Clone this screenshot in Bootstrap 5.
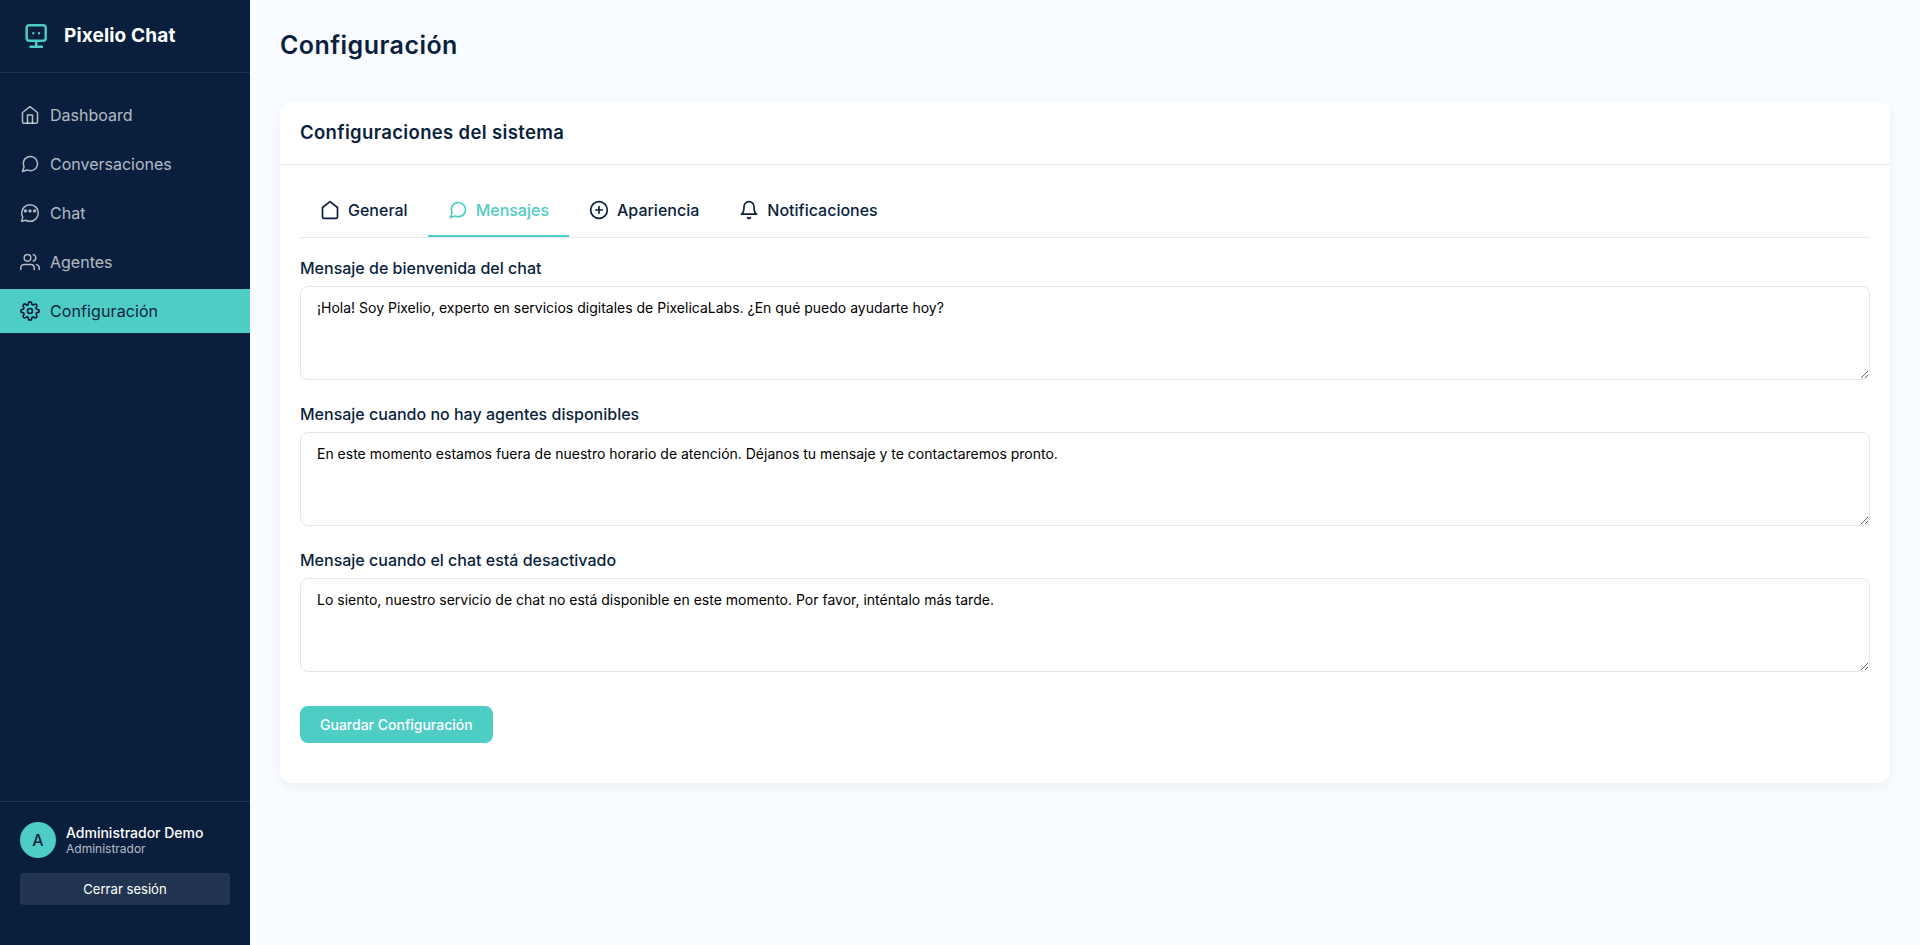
<!DOCTYPE html>
<html lang="es">
<head>
<meta charset="utf-8">
<meta name="viewport" content="width=device-width, initial-scale=1">
<title>Pixelio Chat - Configuración</title>
<link href="https://cdn.jsdelivr.net/npm/bootstrap@5.3.0/dist/css/bootstrap.min.css" rel="stylesheet">
<style>
:root{--navy:#0a1f3d;--teal:#4ecdc4;--line:#e5e7eb}
body{font-family:Inter,"Liberation Sans",sans-serif;background:#f8fbff;color:var(--navy);line-height:1.6}
svg{fill:none;stroke:currentColor;stroke-width:2;stroke-linecap:round;stroke-linejoin:round;flex:none}
.sidebar{width:250px;background:var(--navy);color:#fff}
.brand{height:73px;padding:0 20px;gap:12px;border-bottom:1px solid rgba(255,255,255,.1)}
.brand svg{color:var(--teal);stroke-width:2.4}
.brand-name{font-size:19px;font-weight:650;letter-spacing:.15px}
.side-nav{padding-top:20px;gap:5px}
.side-nav .nav-link{height:44px;padding:1px 20px 0;gap:10px;color:rgba(255,255,255,.7);font-size:16px}
.side-nav svg{stroke-width:1.8;margin-top:-1px}
.side-nav .nav-link.active{background:var(--teal);color:var(--navy);letter-spacing:.1px}
.side-nav .active svg{stroke-width:2}
.side-foot{padding:20px 20px 40px;border-top:1px solid rgba(255,255,255,.1)}
.user-row{gap:10px;margin-bottom:15px}
.avatar{width:36px;height:36px;background:var(--teal);color:var(--navy);font-weight:500;line-height:1}
.user-name{font-size:14px;font-weight:500;line-height:17px}
.user-role{font-size:12px;line-height:15px;color:rgba(255,255,255,.7)}
.btn-logout{height:32px;border:0;border-radius:4px;background:rgba(255,255,255,.1);color:#fff;font-size:13.1px;padding:1px 0 0}
.btn-logout:hover{background:rgba(255,255,255,.2);color:#fff}
.content{padding:25px 30px}
.page-title{font-size:25px;font-weight:600;line-height:40px;letter-spacing:.45px;margin:0 0 37px}
.panel{border:0;border-radius:12px;box-shadow:0 4px 12px rgba(10,31,61,.05)}
.panel .card-header{height:63px;padding:0 20px 1px;background:#fff;border-color:var(--line);border-radius:12px 12px 0 0}
.panel-title{font-size:18.5px;font-weight:600;letter-spacing:.35px;margin:0}
.panel .card-body{padding:20px 20px 40px}
.tabs{border-bottom:1px solid var(--line);height:53px;margin-bottom:20px}
.tabs .nav-link{height:52px;padding:2px 20px 0;gap:8px;font-weight:500;font-size:16px;color:var(--navy);border-bottom:2px solid transparent}
.tabs svg{margin-top:-2px}
.tabs .nav-link.active{color:var(--teal);border-color:var(--teal)}
.form-label{font-weight:500;font-size:16px;line-height:20px;margin-bottom:8px}
textarea.form-control{height:94px;padding:12px 16px;border-color:var(--line);border-radius:8px;color:#000;font-size:14px;line-height:17px;resize:vertical}
.btn-save{height:37px;padding:0 20px;margin-top:34px;border:0;border-radius:8px;background:var(--teal);color:#fff;font-size:14px;font-weight:500}
.btn-save:hover{background:#3dbdb4;color:#fff}
</style>
</head>
<body>
<div class="d-flex vh-100">
  <aside class="sidebar d-flex flex-column flex-shrink-0">
    <div class="brand d-flex align-items-center">
      <svg width="32" height="32" viewBox="0 0 32 32"><rect x="6.700" y="5.200" width="19" height="15.600" rx="2.500"/><path d="M16.200 21v5M10.500 26.700h11.500"/><path d="M13.300 13.300h.01M19 13.300h.01"/></svg>
      <span class="brand-name">Pixelio Chat</span>
    </div>
    <nav class="side-nav nav flex-column flex-nowrap flex-grow-1">
      <a class="nav-link d-flex align-items-center" href="#"><svg width="20" height="20" viewBox="0 0 24 24"><path d="M3 9l9-7 9 7v11a2 2 0 0 1-2 2H5a2 2 0 0 1-2-2z"/><path d="M9 22V12h6v10"/></svg>Dashboard</a>
      <a class="nav-link d-flex align-items-center" href="#"><svg width="20" height="20" viewBox="0 0 24 24"><path d="M21 11.500a8.380 8.380 0 0 1-.9 3.800 8.500 8.500 0 0 1-7.600 4.700 8.380 8.380 0 0 1-3.800-.9L3 21l1.900-5.700a8.380 8.380 0 0 1-.9-3.800 8.500 8.500 0 0 1 4.700-7.600 8.380 8.380 0 0 1 3.800-.9h.5a8.480 8.480 0 0 1 8 8v.5z"/></svg>Conversaciones</a>
      <a class="nav-link d-flex align-items-center" href="#"><svg width="20" height="20" viewBox="0 0 24 24"><path d="M12 22c5.500 0 10-4.500 10-10S17.500 2 12 2 2 6.500 2 12c0 1.800.5 3.500 1.300 5L2 22l5-1.300c1.500.8 3.200 1.300 5 1.300z"/><g fill="currentColor" stroke="none"><circle cx="6.500" cy="9.500" r="2"/><circle cx="12" cy="9.500" r="2"/><circle cx="17.500" cy="9.500" r="2"/></g></svg>Chat</a>
      <a class="nav-link d-flex align-items-center" href="#"><svg width="20" height="20" viewBox="0 0 24 24"><path d="M17 21v-2a4 4 0 0 0-4-4H5a4 4 0 0 0-4 4v2"/><circle cx="9" cy="7" r="4"/><path d="M23 21v-2a4 4 0 0 0-3-3.870M16 3.130a4 4 0 0 1 0 7.750"/></svg>Agentes</a>
      <a class="nav-link active d-flex align-items-center" href="#"><svg width="20" height="20" viewBox="0 0 24 24"><circle cx="12" cy="12" r="3"/><path d="M19.400 15a1.650 1.650 0 0 0 .33 1.820l.06.06a2 2 0 1 1-2.830 2.830l-.06-.06a1.650 1.650 0 0 0-2.800 1.180V21a2 2 0 0 1-4 0v-.09A1.650 1.650 0 0 0 7.180 19.730l-.06.06a2 2 0 1 1-2.830-2.830l.06-.06A1.650 1.650 0 0 0 3.090 14H3a2 2 0 0 1 0-4h.09A1.650 1.650 0 0 0 4.270 7.180l-.06-.06a2 2 0 1 1 2.830-2.830l.06.06A1.650 1.650 0 0 0 10 3.090V3a2 2 0 0 1 4 0v.09a1.650 1.650 0 0 0 2.820 1.180l.06-.06a2 2 0 1 1 2.830 2.830l-.06.06A1.650 1.650 0 0 0 20.910 10H21a2 2 0 0 1 0 4h-.09a1.650 1.650 0 0 0-1.510 1z"/></svg>Configuración</a>
    </nav>
    <div class="side-foot">
      <div class="user-row d-flex align-items-center">
        <div class="avatar rounded-circle d-flex align-items-center justify-content-center">A</div>
        <div><div class="user-name">Administrador Demo</div><div class="user-role">Administrador</div></div>
      </div>
      <button class="btn btn-logout w-100 d-block" type="button">Cerrar sesión</button>
    </div>
  </aside>
  <main class="content flex-grow-1">
    <h1 class="page-title">Configuración</h1>
    <section class="card panel">
      <div class="card-header d-flex align-items-center"><h2 class="panel-title">Configuraciones del sistema</h2></div>
      <div class="card-body">
        <div class="tabs nav flex-nowrap">
          <a class="nav-link d-flex align-items-center" href="#"><svg width="20" height="20" viewBox="0 0 24 24"><path d="M3 9l9-7 9 7v11a2 2 0 0 1-2 2H5a2 2 0 0 1-2-2z"/></svg>General</a>
          <a class="nav-link active d-flex align-items-center" href="#"><svg width="20" height="20" viewBox="0 0 24 24"><path d="M21 11.500a8.380 8.380 0 0 1-.9 3.800 8.500 8.500 0 0 1-7.600 4.700 8.380 8.380 0 0 1-3.800-.9L3 21l1.900-5.700a8.380 8.380 0 0 1-.9-3.800 8.500 8.500 0 0 1 4.700-7.600 8.380 8.380 0 0 1 3.800-.9h.5a8.480 8.480 0 0 1 8 8v.5z"/></svg>Mensajes</a>
          <a class="nav-link d-flex align-items-center" href="#"><svg width="20" height="20" viewBox="0 0 24 24"><circle cx="12" cy="12" r="10"/><path d="M12 8v8M8 12h8"/></svg>Apariencia</a>
          <a class="nav-link d-flex align-items-center" href="#"><svg width="20" height="20" viewBox="0 0 24 24"><path d="M18 8A6 6 0 0 0 6 8c0 7-3 9-3 9h18s-3-2-3-9M13.730 21a2 2 0 0 1-3.460 0"/></svg>Notificaciones</a>
        </div>
        <form>
          <div class="field"><label class="form-label d-block" for="m1">Mensaje de bienvenida del chat</label><textarea class="form-control" id="m1">¡Hola! Soy Pixelio, experto en servicios digitales de PixelicaLabs. ¿En qué puedo ayudarte hoy?</textarea></div>
          <div class="field mt-4"><label class="form-label d-block" for="m2">Mensaje cuando no hay agentes disponibles</label><textarea class="form-control" id="m2">En este momento estamos fuera de nuestro horario de atención. Déjanos tu mensaje y te contactaremos pronto.</textarea></div>
          <div class="field mt-4"><label class="form-label d-block" for="m3">Mensaje cuando el chat está desactivado</label><textarea class="form-control" id="m3">Lo siento, nuestro servicio de chat no está disponible en este momento. Por favor, inténtalo más tarde.</textarea></div>
          <button class="btn btn-save d-block" type="button">Guardar Configuración</button>
        </form>
      </div>
    </section>
  </main>
</div>
<script src="https://cdn.jsdelivr.net/npm/bootstrap@5.3.0/dist/js/bootstrap.bundle.min.js"></script>
</body>
</html>
